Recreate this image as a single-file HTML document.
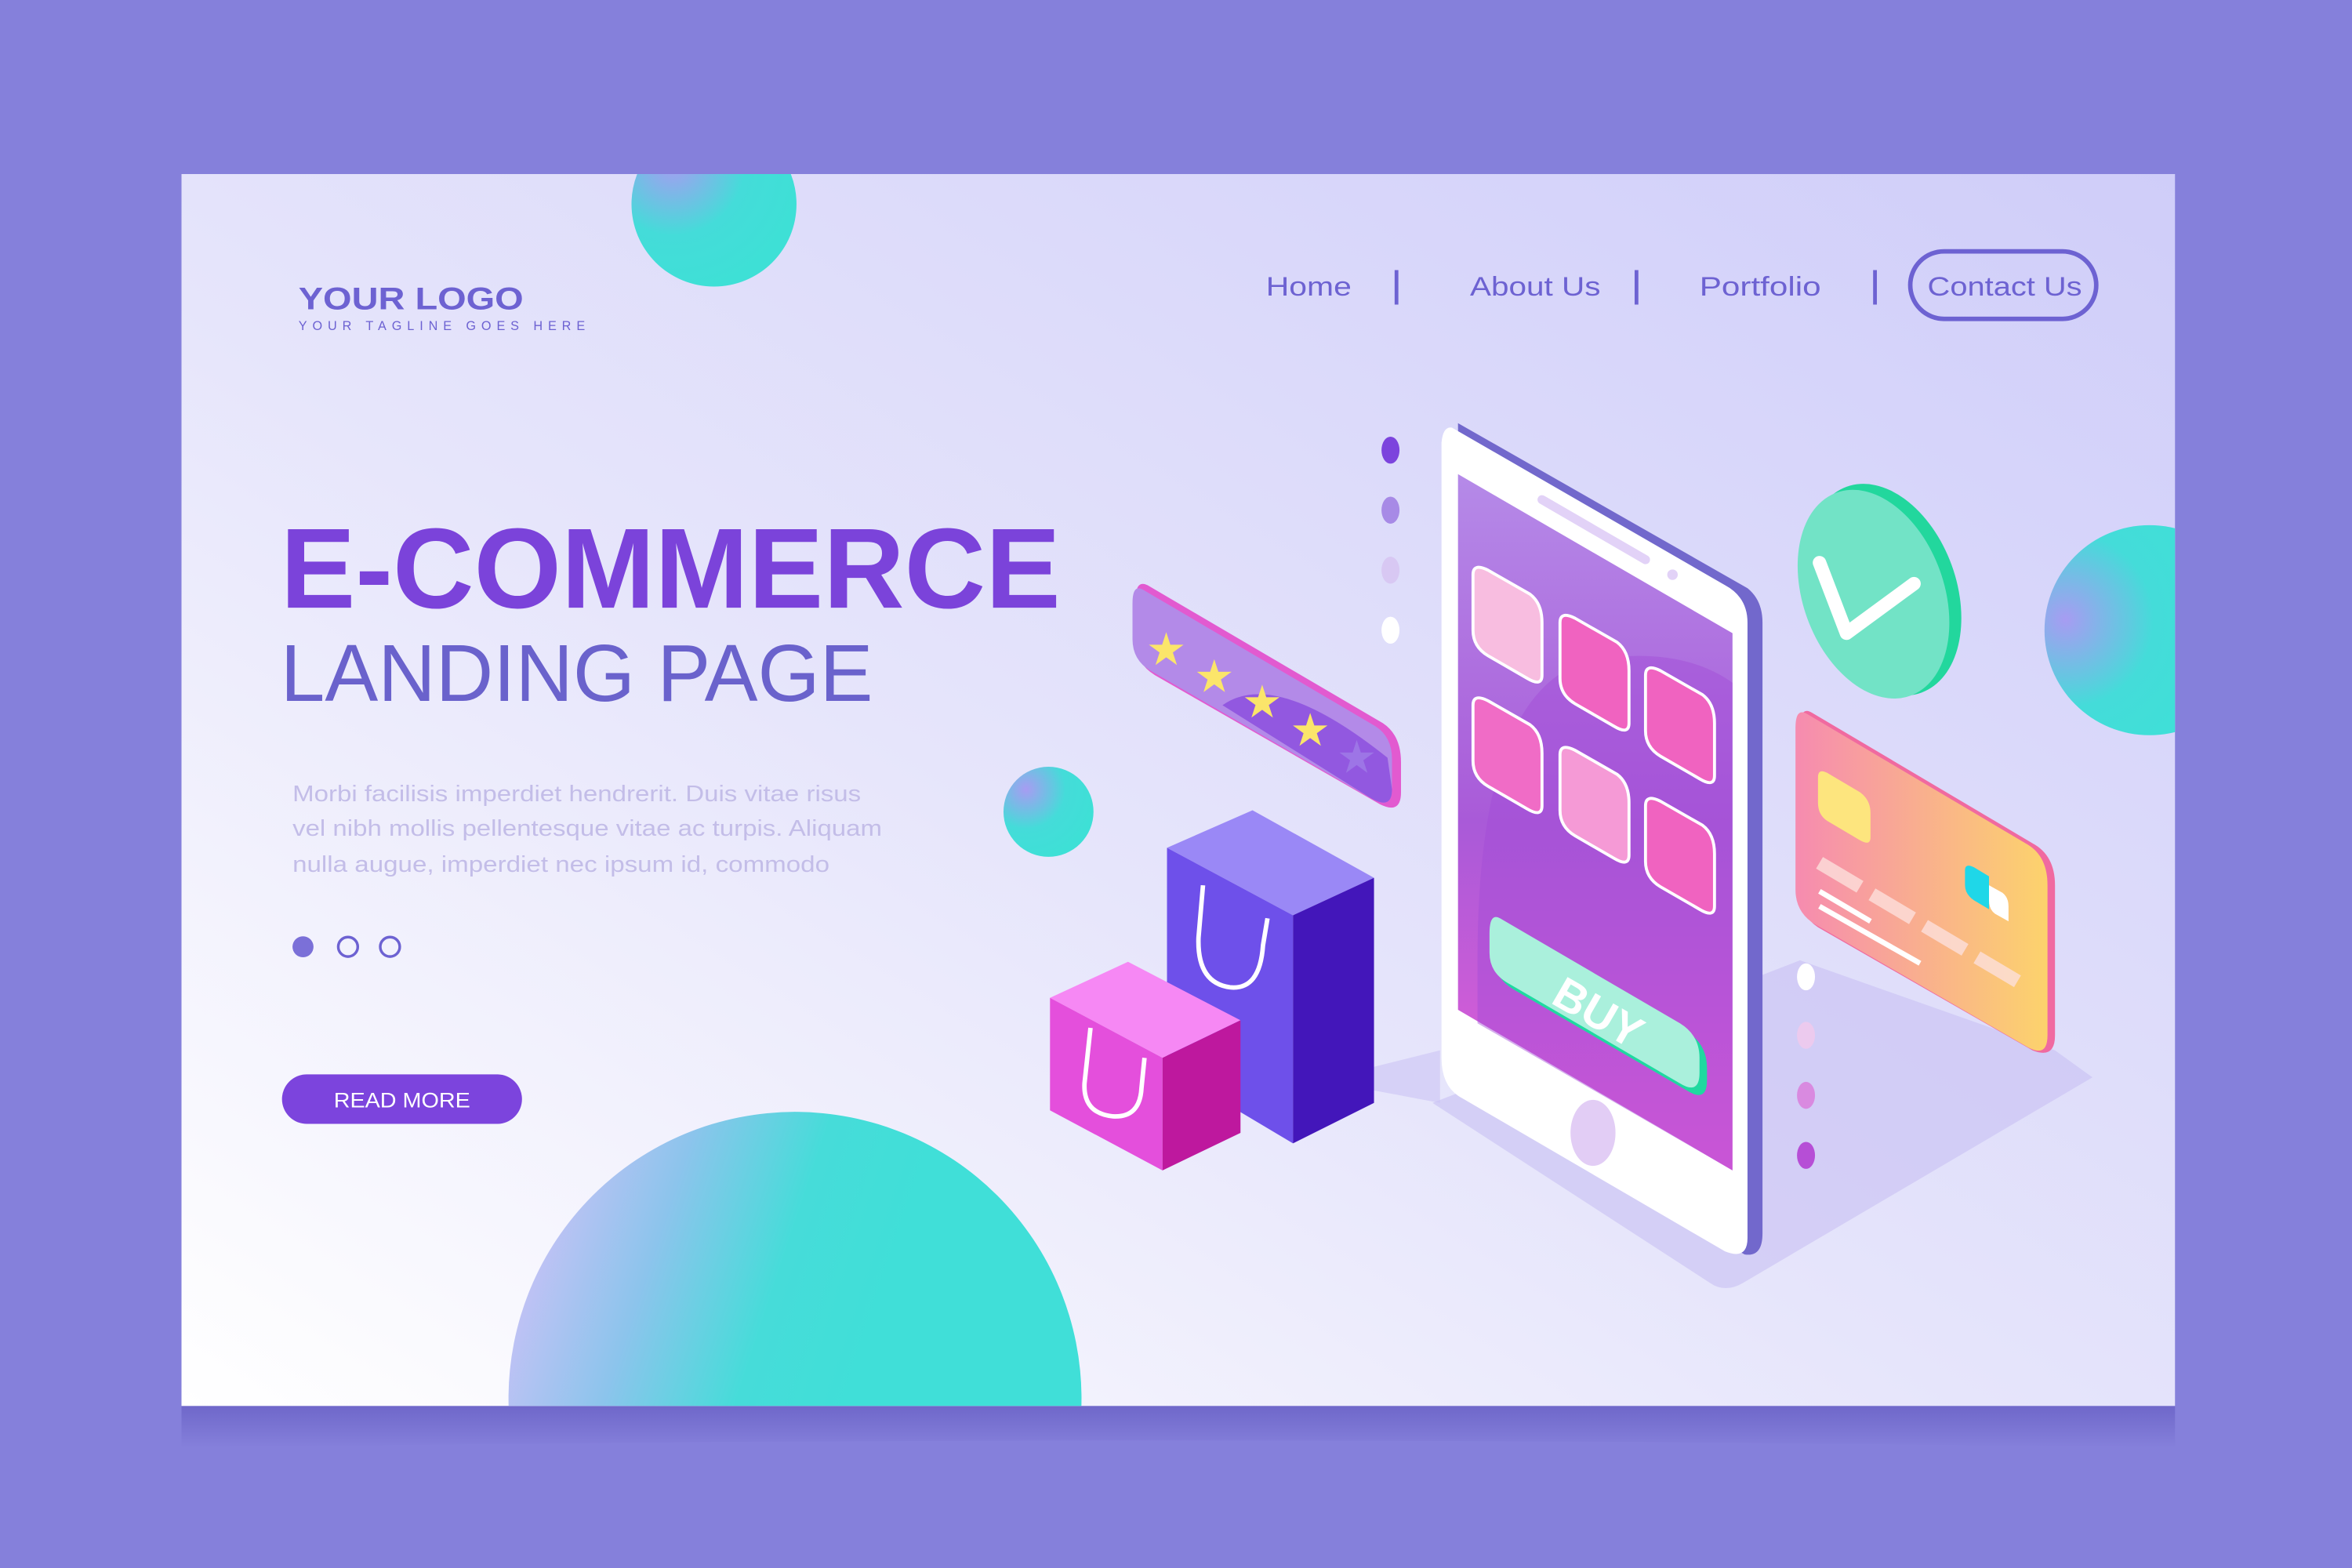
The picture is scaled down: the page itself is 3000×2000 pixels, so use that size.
<!DOCTYPE html>
<html><head><meta charset="utf-8"><style>
html,body{margin:0;padding:0;width:3000px;height:2000px;overflow:hidden;background:#8580db}
svg{display:block;position:absolute;left:0;top:0}
text{font-family:"Liberation Sans",sans-serif}
</style></head><body>
<svg width="3000" height="2000" viewBox="0 0 1568 1045" preserveAspectRatio="none" xmlns="http://www.w3.org/2000/svg">
<defs>
<linearGradient id="card" x1="0" y1="1" x2="1" y2="0"><stop offset="0" stop-color="#ffffff"/><stop offset="0.45" stop-color="#e6e5fb"/><stop offset="1" stop-color="#cfcdf9"/></linearGradient>
<radialGradient id="ball" cx="0.25" cy="0.25" r="0.8"><stop offset="0" stop-color="#a79cf2"/><stop offset="0.55" stop-color="#44dcd9"/><stop offset="1" stop-color="#3ee0d6"/></radialGradient>
<radialGradient id="ball2" cx="0.1" cy="0.45" r="0.7"><stop offset="0" stop-color="#a79cf2"/><stop offset="0.6" stop-color="#44dcd9"/><stop offset="1" stop-color="#40dfd8"/></radialGradient>
<linearGradient id="ball3" x1="0" y1="0.3" x2="0.6" y2="0.5"><stop offset="0" stop-color="#c8c2f6"/><stop offset="0.35" stop-color="#8cc4ec"/><stop offset="0.7" stop-color="#46dcd9"/><stop offset="1" stop-color="#40dfd8"/></linearGradient>
<linearGradient id="scr" x1="0" y1="0" x2="0" y2="1"><stop offset="0" stop-color="#b58ae8"/><stop offset="0.5" stop-color="#a95ad8"/><stop offset="1" stop-color="#ea5ed6"/></linearGradient>
<linearGradient id="cc" x1="0" y1="0" x2="1" y2="0"><stop offset="0" stop-color="#f68bb0"/><stop offset="1" stop-color="#fcd36c"/></linearGradient>
<linearGradient id="shadow" x1="0" y1="0" x2="0" y2="1"><stop offset="0" stop-color="#6a62c6"/><stop offset="1" stop-color="#8580db"/></linearGradient>
<clipPath id="cardclip"><rect x="121" y="116" width="1329" height="821"/></clipPath>
</defs>
<path d="M121 937 Q785 925 1450 937 L1450 965 Q785 955 121 965Z" fill="url(#shadow)"/>
<rect x="121" y="116" width="1329" height="821" fill="url(#card)"/>
<g clip-path="url(#cardclip)">
<circle cx="476" cy="136" r="55" fill="url(#ball)"/>
<circle cx="1433" cy="420" r="70" fill="url(#ball2)"/>
<circle cx="530" cy="932" r="191" fill="url(#ball3)"/>
<circle cx="699" cy="541" r="30" fill="url(#ball)"/>
</g>
<!-- logo -->
<text x="199" y="206" font-size="21" font-weight="bold" fill="#6d62d2" textLength="150" lengthAdjust="spacingAndGlyphs">YOUR LOGO</text>
<text x="199" y="220" font-size="8.5" fill="#6d62d2" textLength="191" lengthAdjust="spacing">YOUR TAGLINE GOES HERE</text>
<!-- nav -->
<g font-size="18" fill="#6d62d2">
<text x="844" y="197" textLength="57" lengthAdjust="spacingAndGlyphs">Home</text>
<text x="980" y="197" textLength="87" lengthAdjust="spacingAndGlyphs">About Us</text>
<text x="1133" y="197" textLength="81" lengthAdjust="spacingAndGlyphs">Portfolio</text>
<text x="1285" y="197" textLength="103" lengthAdjust="spacingAndGlyphs">Contact Us</text>
</g>
<g stroke="#6d62d2" stroke-width="2.5"><line x1="931" y1="180" x2="931" y2="203"/><line x1="1091" y1="180" x2="1091" y2="203"/><line x1="1250" y1="180" x2="1250" y2="203"/></g>
<rect x="1273.5" y="167.5" width="124" height="45" rx="22.5" fill="none" stroke="#6d62d2" stroke-width="3"/>
<!-- headings -->
<text x="187" y="405" font-size="76" font-weight="bold" fill="#7b43da" textLength="520" lengthAdjust="spacingAndGlyphs">E-COMMERCE</text>
<text x="187" y="467" font-size="54" fill="#6a62cc" textLength="395" lengthAdjust="spacingAndGlyphs">LANDING PAGE</text>
<g font-size="15" fill="#c3bde8">
<text x="195" y="534" textLength="379" lengthAdjust="spacingAndGlyphs">Morbi facilisis imperdiet hendrerit. Duis vitae risus</text>
<text x="195" y="557" textLength="393" lengthAdjust="spacingAndGlyphs">vel nibh mollis pellentesque vitae ac turpis. Aliquam</text>
<text x="195" y="581" textLength="358" lengthAdjust="spacingAndGlyphs">nulla augue, imperdiet nec ipsum id, commodo</text>
</g>
<circle cx="202" cy="631" r="7" fill="#7b70d8"/>
<circle cx="232" cy="631" r="6.5" fill="none" stroke="#6d62d2" stroke-width="1.8"/>
<circle cx="260" cy="631" r="6.5" fill="none" stroke="#6d62d2" stroke-width="1.8"/>
<rect x="188" y="716" width="160" height="33" rx="16.5" fill="#7c44dd"/>
<text x="268" y="738" font-size="14" fill="#fff" text-anchor="middle" textLength="91" lengthAdjust="spacingAndGlyphs">READ MORE</text>
<!-- floor shadow -->
<path d="M955 735 L1140 855 Q1150 862 1162 855 L1395 718 L1370 700 L1200 640 Z" fill="#c8c0f3" opacity="0.6"/>
<path d="M880 720 L960 700 L960 735 Z" fill="#cbc3f5" opacity="0.6"/>
<!-- dots -->
<g>
<ellipse cx="927" cy="300" rx="6" ry="9" fill="#7c44dd"/>
<ellipse cx="927" cy="340" rx="6" ry="9" fill="#a78ae6"/>
<ellipse cx="927" cy="380" rx="6" ry="9" fill="#d8c8f3"/>
<ellipse cx="927" cy="420" rx="6" ry="9" fill="#fff"/>
<ellipse cx="1204" cy="651" rx="6" ry="9" fill="#fff"/>
<ellipse cx="1204" cy="690" rx="6" ry="9" fill="#eccaee"/>
<ellipse cx="1204" cy="730" rx="6" ry="9" fill="#d98ae0"/>
<ellipse cx="1204" cy="770" rx="6" ry="9" fill="#b64ed6"/>
</g>
<!-- phone -->
<path d="M972 282 L1165 392 Q1175 400 1175 415 L1175 822 Q1175 838 1163 836 L975 725 Z" fill="#7268cc"/>
<path d="M968 285 Q962 284 961 295 L961 705 Q961 725 975 732 L1150 834 Q1165 840 1165 825 L1165 415 Q1165 398 1150 390 Z" fill="#fff"/>
<path d="M972 316 L1155 422 L1155 780 L972 673 Z" fill="url(#scr)"/>
<path d="M985 640 Q985 460 1060 440 Q1120 430 1155 455 L1155 780 L985 682 Z" fill="#a24bd8" opacity="0.45"/>
<line x1="1028" y1="333" x2="1097" y2="373" stroke="#e2d2f7" stroke-width="6" stroke-linecap="round"/>
<circle cx="1115" cy="383" r="3.5" fill="#e2d2f7"/>
<g fill="#f7a5d8" stroke="#fff" stroke-width="2">
<path d="M982 383 Q982 375 992 380 L1020 396 Q1028 402 1028 415 L1028 450 Q1028 458 1018 452 L992 437 Q982 431 982 420Z" fill="#f8bde0"/>
<path d="M1040 415 Q1040 407 1050 412 L1078 428 Q1086 434 1086 447 L1086 482 Q1086 490 1076 484 L1050 469 Q1040 463 1040 452Z" fill="#f063c0"/>
<path d="M1097 450 Q1097 442 1107 447 L1135 463 Q1143 469 1143 482 L1143 517 Q1143 525 1133 519 L1107 504 Q1097 498 1097 487Z" fill="#f063c0"/>
<path d="M982 470 Q982 462 992 467 L1020 483 Q1028 489 1028 502 L1028 537 Q1028 545 1018 539 L992 524 Q982 518 982 507Z" fill="#f06cc6"/>
<path d="M1040 503 Q1040 495 1050 500 L1078 516 Q1086 522 1086 535 L1086 570 Q1086 578 1076 572 L1050 557 Q1040 551 1040 540Z" fill="#f59ad6"/>
<path d="M1097 537 Q1097 529 1107 534 L1135 550 Q1143 556 1143 569 L1143 604 Q1143 612 1133 606 L1107 591 Q1097 585 1097 574Z" fill="#f063c0"/>
</g>
<path d="M1000 615 L1125 688 Q1138 696 1138 712 L1138 720 Q1138 735 1125 727 L1010 660 Q996 652 996 638 L996 625 Q996 612 1000 615Z" fill="#1fd9a0"/>
<path d="M1000 612 L1120 682 Q1133 690 1133 705 L1133 715 Q1133 730 1120 722 L1005 655 Q993 648 993 635 L993 622 Q993 608 1000 612Z" fill="#aaf0dc"/>
<text x="0" y="0" font-size="30" font-weight="bold" fill="#fff" transform="translate(1033 668) rotate(30)">BUY</text>
<ellipse cx="1062" cy="755" rx="15" ry="22" fill="#e2cdf5"/>
<!-- rating bar -->
<g>
<path d="M765 390 L922 482 Q934 490 934 508 L934 528 Q934 543 920 536 L770 450 Q757 442 757 428 L757 400 Q757 386 765 390Z" fill="#e25ad0"/>
<path d="M762 393 L917 484 Q928 491 928 506 L928 526 Q928 540 914 532 L767 447 Q755 440 755 426 L755 402 Q755 389 762 393Z" fill="#b38ae8"/>
<path d="M815 470 Q850 445 925 505 L928 526 Q928 540 914 532Z" fill="#8a4bdd" opacity="0.8"/>
<g fill="#fbe56a" font-size="30"><text x="764" y="443">★</text><text x="796" y="461">★</text><text x="828" y="478">★</text><text x="860" y="497">★</text><text x="891" y="515" fill="#9d75e6">★</text></g>
</g>
<!-- bags -->
<path d="M778 565 L835 540 L916 585 L862 610 Z" fill="#9a88f6"/>
<path d="M778 565 L862 610 L862 762 L778 712 Z" fill="#6e50ea"/>
<path d="M862 610 L916 585 L916 735 L862 762 Z" fill="#4316ba"/>
<path d="M802 590 L799 625 Q798 655 820 658 Q840 660 842 630 L845 612" fill="none" stroke="#fff" stroke-width="3"/>
<path d="M700 665 L752 641 L827 680 L775 705 Z" fill="#f688f4"/>
<path d="M700 665 L775 705 L775 780 L700 740 Z" fill="#e44fdc"/>
<path d="M775 705 L827 680 L827 755 L775 780 Z" fill="#be189e"/>
<path d="M727 685 L723 722 Q722 742 742 744 Q760 745 761 725 L763 705" fill="none" stroke="#fff" stroke-width="3"/>
<!-- check -->
<ellipse cx="1256" cy="393" rx="48" ry="73" transform="rotate(-20 1256 393)" fill="#22d79d"/>
<ellipse cx="1249" cy="396" rx="47" ry="72" transform="rotate(-20 1249 396)" fill="#72e3c6"/>
<path d="M1213 375 L1231 422 L1276 389" fill="none" stroke="#fff" stroke-width="9" stroke-linecap="round" stroke-linejoin="round"/>
<!-- credit card -->
<path d="M1208 475 L1355 562 Q1370 570 1370 590 L1370 690 Q1370 706 1355 700 L1212 618 Q1200 610 1200 595 L1200 485 Q1200 470 1208 475Z" fill="#f06aa0"/>
<path d="M1205 476 L1352 563 Q1365 571 1365 590 L1365 690 Q1365 705 1352 698 L1210 616 Q1197 608 1197 593 L1197 485 Q1197 471 1205 476Z" fill="url(#cc)"/>
<path d="M1212 518 Q1212 512 1218 515 L1240 528 Q1247 533 1247 542 L1247 558 Q1247 564 1240 560 L1218 547 Q1212 543 1212 535Z" fill="#fde57e"/>
<path d="M1310 580 Q1310 575 1316 578 L1326 584 L1326 606 L1316 600 Q1310 596 1310 590Z" fill="#1fd7e8"/>
<path d="M1326 590 L1335 595 Q1339 598 1339 604 L1339 614 L1330 609 Q1326 606 1326 600Z" fill="#fff"/>
<g stroke="#fde0dc" stroke-width="9" opacity="0.8"><line x1="1213" y1="575" x2="1240" y2="591"/><line x1="1248" y1="596" x2="1275" y2="612"/><line x1="1283" y1="617" x2="1310" y2="633"/><line x1="1318" y1="638" x2="1345" y2="654"/></g>
<g stroke="#fff" stroke-width="3.5"><line x1="1213" y1="594" x2="1247" y2="614"/><line x1="1213" y1="604" x2="1280" y2="642"/></g>
</svg>
</body></html>
